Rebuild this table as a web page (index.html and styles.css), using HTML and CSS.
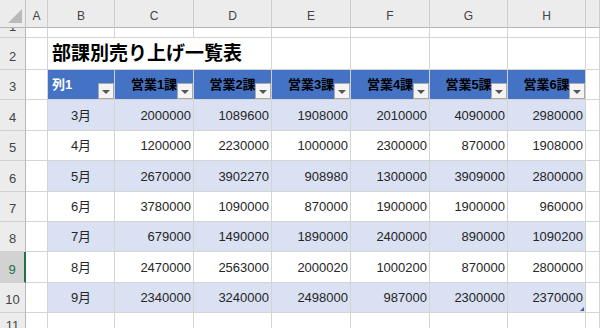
FILE: index.html
```html
<!DOCTYPE html>
<html lang="ja">
<head>
<meta charset="utf-8">
<title>部課別売り上げ一覧表</title>
<link rel="stylesheet" href="styles.css">
</head>
<body>
<div class="sheet">
  <div class="corner"><svg width="26" height="28" viewBox="0 0 26 28"><polygon points="22,9 22,23 8,23" fill="#b9b9b9"/></svg></div>
  <div class="ch">A</div><div class="ch">B</div><div class="ch">C</div><div class="ch">D</div><div class="ch">E</div><div class="ch">F</div><div class="ch">G</div><div class="ch">H</div><div class="ch"></div>

  <div class="rh r1"><span>1</span></div>
  <div class="c"></div><div class="c"></div><div class="c"></div><div class="c"></div><div class="c"></div><div class="c"></div><div class="c"></div><div class="c"></div><div class="c"></div>

  <div class="rh"><span>2</span></div>
  <div class="c"></div><div class="c title">部課別売り上げ一覧表</div><div class="c"></div><div class="c"></div><div class="c"></div><div class="c"></div><div class="c"></div>

  <div class="rh"><span>3</span></div>
  <div class="c"></div>
  <div class="th first">列1<span class="fb"></span></div>
  <div class="th">営業1課<span class="fb"></span></div>
  <div class="th">営業2課<span class="fb"></span></div>
  <div class="th">営業3課<span class="fb"></span></div>
  <div class="th">営業4課<span class="fb"></span></div>
  <div class="th">営業5課<span class="fb"></span></div>
  <div class="th">営業6課<span class="fb"></span></div>
  <div class="c"></div>

  <div class="rh"><span>4</span></div>
  <div class="c"></div><div class="c m band">3月</div><div class="c n band">2000000</div><div class="c n band">1089600</div><div class="c n band">1908000</div><div class="c n band">2010000</div><div class="c n band">4090000</div><div class="c n band">2980000</div><div class="c"></div>

  <div class="rh"><span>5</span></div>
  <div class="c"></div><div class="c m">4月</div><div class="c n">1200000</div><div class="c n">2230000</div><div class="c n">1000000</div><div class="c n">2300000</div><div class="c n">870000</div><div class="c n">1908000</div><div class="c"></div>

  <div class="rh"><span>6</span></div>
  <div class="c"></div><div class="c m band">5月</div><div class="c n band">2670000</div><div class="c n band">3902270</div><div class="c n band">908980</div><div class="c n band">1300000</div><div class="c n band">3909000</div><div class="c n band">2800000</div><div class="c"></div>

  <div class="rh"><span>7</span></div>
  <div class="c"></div><div class="c m">6月</div><div class="c n">3780000</div><div class="c n">1090000</div><div class="c n">870000</div><div class="c n">1900000</div><div class="c n">1900000</div><div class="c n">960000</div><div class="c"></div>

  <div class="rh"><span>8</span></div>
  <div class="c"></div><div class="c m band">7月</div><div class="c n band">679000</div><div class="c n band">1490000</div><div class="c n band">1890000</div><div class="c n band">2400000</div><div class="c n band">890000</div><div class="c n band">1090200</div><div class="c"></div>

  <div class="rh sel"><span>9</span></div>
  <div class="c"></div><div class="c m">8月</div><div class="c n">2470000</div><div class="c n">2563000</div><div class="c n">2000020</div><div class="c n">1000200</div><div class="c n">870000</div><div class="c n">2800000</div><div class="c"></div>

  <div class="rh"><span>10</span></div>
  <div class="c"></div><div class="c m band">9月</div><div class="c n band">2340000</div><div class="c n band">3240000</div><div class="c n band">2498000</div><div class="c n band">987000</div><div class="c n band">2300000</div><div class="c n band last">2370000<span class="handle"></span></div><div class="c"></div>

  <div class="rh"><span>11</span></div>
  <div class="c"></div><div class="c"></div><div class="c"></div><div class="c"></div><div class="c"></div><div class="c"></div><div class="c"></div><div class="c"></div><div class="c"></div>
</div>
</body>
</html>
```

FILE: styles.css
```css
html, body {
  margin: 0;
  padding: 0;
  background: #ffffff;
  overflow: hidden;
}

.sheet {
  display: grid;
  grid-template-columns: 26px 22px 67px 79px 78px 79px 79px 78px 78px 14px;
  grid-template-rows: 28px 10px 32px 30px 31px 30px 31px 30px 30px 31px 30px 26px;
  width: 600px;
  font-family: "Liberation Sans", "Noto Sans CJK JP", sans-serif;
  font-size: 13px;
  line-height: 16px;
  color: #262626;
}

.sheet > div {
  box-sizing: border-box;
  min-width: 0;
  overflow: hidden;
  white-space: nowrap;
}

.corner {
  background: #ececec;
  border-right: 1px solid #c4c4c4;
  border-bottom: 1px solid #b4b4b4;
}

.corner svg {
  display: block;
}

.ch {
  background: #ececec;
  border-right: 1px solid #cdcdcd;
  border-bottom: 1px solid #b4b4b4;
  color: #444444;
  font-size: 12px;
  display: flex;
  align-items: flex-end;
  justify-content: center;
  padding-bottom: 3px;
}

.rh {
  background: #ececec;
  border-right: 1px solid #b8b8b8;
  border-bottom: 1px solid #d0d0d0;
  color: #444444;
  display: flex;
  align-items: flex-end;
  justify-content: center;
  padding-bottom: 4px;
}

.rh.r1 {
  padding-bottom: 2px;
}

.rh.sel {
  background: #d2d2d2;
  color: #217346;
  border-right: 2px solid #217346;
}

.c {
  border-right: 1px solid #d4d4d4;
  border-bottom: 1px solid #d4d4d4;
  display: flex;
  align-items: flex-end;
  padding-bottom: 6px;
}

.title {
  grid-column: span 3;
  font-size: 19px;
  line-height: 24px;
  font-weight: bold;
  color: #000000;
  padding-left: 4px;
  padding-bottom: 3px;
}

.th {
  position: relative;
  background: #4472c4;
  border-right: 1px solid #c9cfdb;
  border-bottom: 1px solid #d4d4d4;
  color: #000000;
  font-weight: bold;
  display: flex;
  align-items: flex-end;
  justify-content: center;
  padding-bottom: 6px;
}

.th.first {
  justify-content: flex-start;
  color: #ffffff;
  padding-left: 4px;
}

.fb {
  position: absolute;
  right: 0;
  bottom: 0;
  width: 16px;
  height: 16px;
  box-sizing: border-box;
  background: #f4f4f4;
  border: 1px solid #a9a9a9;
  display: flex;
  align-items: center;
  justify-content: center;
}

.fb::after {
  content: "";
  width: 0;
  height: 0;
  margin-top: 1px;
  border-left: 4px solid transparent;
  border-right: 4px solid transparent;
  border-top: 4px solid #555555;
}

.band {
  background: #d9e1f2;
}

.m {
  justify-content: center;
}

.n {
  justify-content: flex-end;
  padding-right: 2px;
}

.last {
  position: relative;
}

.handle {
  position: absolute;
  right: 1px;
  bottom: 1px;
  width: 0;
  height: 0;
  border-left: 4px solid transparent;
  border-bottom: 4px solid #3f5fa8;
}
```
